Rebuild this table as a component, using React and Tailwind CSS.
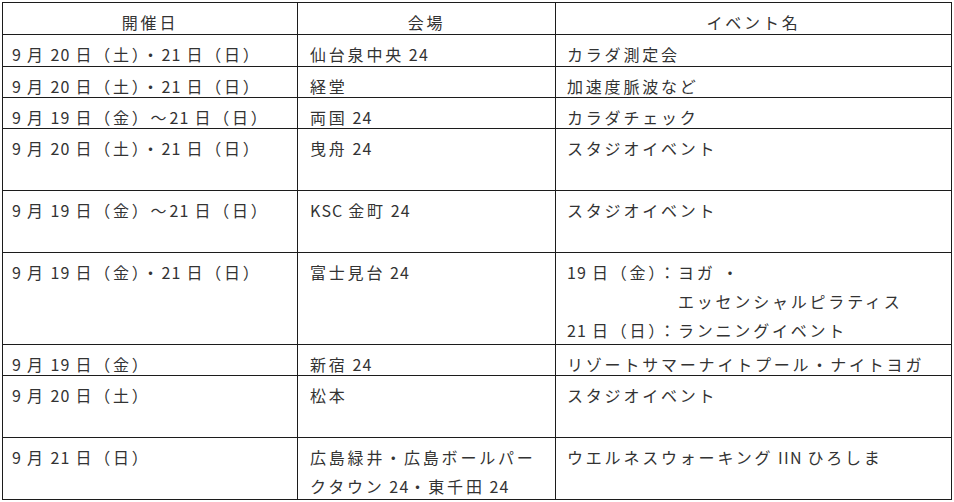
import React from 'react';

const rows = [
    { h: 'h-[32px]', date: '9 月 20 日（土）・21 日（日）', place: '仙台泉中央 24', event: 'カラダ測定会' },
    { h: 'h-[31px]', date: '9 月 20 日（土）・21 日（日）', place: '経堂', event: '加速度脈波など' },
    { h: 'h-[31px]', date: '9 月 19 日（金）～21 日（日）', place: '両国 24', event: 'カラダチェック' },
    { h: 'h-[62px]', date: '9 月 20 日（土）・21 日（日）', place: '曳舟 24', event: 'スタジオイベント' },
    { h: 'h-[62px]', date: '9 月 19 日（金）～21 日（日）', place: 'KSC 金町 24', event: 'スタジオイベント' },
    { h: 'h-[92px]', date: '9 月 19 日（金）・21 日（日）', place: '富士見台 24', event: 'multi' },
    { h: 'h-[31px]', date: '9 月 19 日（金）', place: '新宿 24', event: 'リゾートサマーナイトプール・ナイトヨガ' },
    { h: 'h-[62px]', date: '9 月 20 日（土）', place: '松本', event: 'スタジオイベント' },
    { h: 'h-[62px]', date: '9 月 21 日（日）', place: '広島緑井・広島ボールパークタウン 24・東千田 24', event: 'ウエルネスウォーキング IIN ひろしま' },
];

// latin runs get tighter spacing than the japanese text
function T({ children }) {
    const parts = children.split(/([\x20-\x7e]+)/);
    return parts.map((p, i) =>
        /^[\x20-\x7e]+$/.test(p)
            ? <span key={i} className="tracking-[1.2px]">{p}</span>
            : <React.Fragment key={i}>{p}</React.Fragment>
    );
}

function MultiEvent() {
    return (
        <div className="grid grid-cols-[auto_1fr]">
            <span><T>19 日（金）：</T></span>
            <span>ヨガ ・<br />エッセンシャルピラティス</span>
            <span><T>21 日（日）：</T></span>
            <span>ランニングイベント</span>
        </div>
    );
}

export default function App() {
    const cell = 'border border-[#1c1c1c] align-top p-0 pt-[5px] leading-[29px]';
    return (
        <div className="w-[954px] h-[502px] bg-white pt-[2px] pl-[2px]"
            style={{ fontFamily: '"Noto Sans CJK JP", "Noto Sans", sans-serif' }}>
            <table className="table-fixed border-collapse text-[16px] tracking-[2.8px] text-[#333]">
                <colgroup>
                    <col className="w-[295px]" />
                    <col className="w-[258px]" />
                    <col className="w-[396px]" />
                </colgroup>
                <thead>
                    <tr className="h-[32px]">
                        <th className={`${cell} font-normal text-center`}><div className="-mb-[6px]">開催日</div></th>
                        <th className={`${cell} font-normal text-center`}><div className="-mb-[6px]">会場</div></th>
                        <th className={`${cell} font-normal text-center`}><div className="-mb-[6px]">イベント名</div></th>
                    </tr>
                </thead>
                <tbody>
                    {rows.map((r, i) => (
                        <tr key={i} className={r.h}>
                            <td className={`${cell} pl-[9px] whitespace-nowrap`}>
                                <div className="-mb-[6px]"><T>{r.date}</T></div>
                            </td>
                            <td className={`${cell} pl-[12px] pr-[8px]`}>
                                <div className="-mb-[6px]"><T>{r.place}</T></div>
                            </td>
                            <td className={`${cell} pl-[11px] whitespace-nowrap`}>
                                <div className="-mb-[6px]">
                                    {r.event === 'multi' ? <MultiEvent /> : <T>{r.event}</T>}
                                </div>
                            </td>
                        </tr>
                    ))}
                </tbody>
            </table>
        </div>
    );
}
